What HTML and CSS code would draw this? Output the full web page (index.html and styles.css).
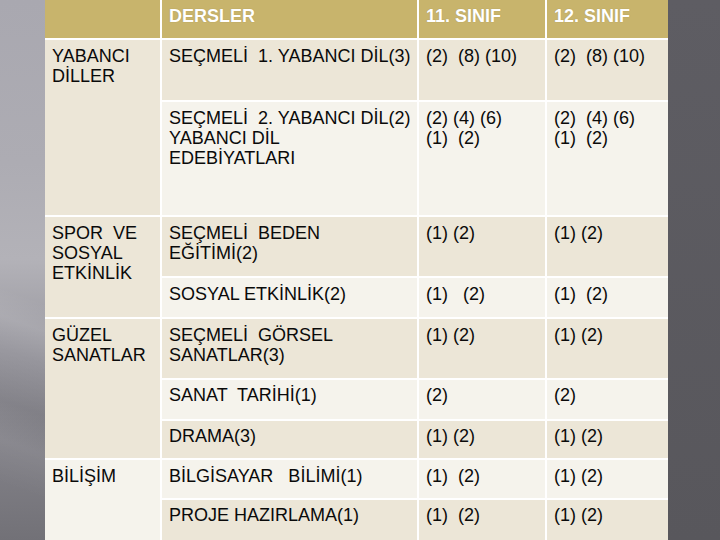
FILE: index.html
```html
<!DOCTYPE html>
<html lang="tr">
<head>
<meta charset="utf-8">
<title>Dersler</title>
<link rel="stylesheet" href="styles.css">
</head>
<body>
<div class="slide">
  <div class="grid">
    <div class="cell head"></div>
    <div class="cell head">DERSLER</div>
    <div class="cell head">11. SINIF</div>
    <div class="cell head">12. SINIF</div>

    <div class="cell dark span2">YABANCI<br>DİLLER</div>
    <div class="cell dark">SEÇMELİ  1. YABANCI DİL(3)</div>
    <div class="cell dark">(2)  (8) (10)</div>
    <div class="cell dark">(2)  (8) (10)</div>

    <div class="cell light">SEÇMELİ  2. YABANCI DİL(2)<br>YABANCI DİL<br>EDEBİYATLARI</div>
    <div class="cell light">(2) (4) (6)<br>(1)  (2)</div>
    <div class="cell light">(2)  (4) (6)<br>(1)  (2)</div>

    <div class="cell dark span2">SPOR  VE<br>SOSYAL<br>ETKİNLİK</div>
    <div class="cell dark">SEÇMELİ  BEDEN<br>EĞİTİMİ(2)</div>
    <div class="cell dark">(1) (2)</div>
    <div class="cell dark">(1) (2)</div>

    <div class="cell light">SOSYAL ETKİNLİK(2)</div>
    <div class="cell light">(1)   (2)</div>
    <div class="cell light">(1)  (2)</div>

    <div class="cell dark span3">GÜZEL<br>SANATLAR</div>
    <div class="cell dark">SEÇMELİ  GÖRSEL<br>SANATLAR(3)</div>
    <div class="cell dark">(1) (2)</div>
    <div class="cell dark">(1) (2)</div>

    <div class="cell light short">SANAT  TARİHİ(1)</div>
    <div class="cell light short">(2)</div>
    <div class="cell light short">(2)</div>

    <div class="cell dark short">DRAMA(3)</div>
    <div class="cell dark short">(1) (2)</div>
    <div class="cell dark short">(1) (2)</div>

    <div class="cell light span2">BİLİŞİM</div>
    <div class="cell light">BİLGİSAYAR   BİLİMİ(1)</div>
    <div class="cell light">(1)  (2)</div>
    <div class="cell light">(1) (2)</div>

    <div class="cell dark short">PROJE HAZIRLAMA(1)</div>
    <div class="cell dark short">(1)  (2)</div>
    <div class="cell dark short">(1) (2)</div>
  </div>
</div>
</body>
</html>
```

FILE: styles.css
```css
html, body {
  margin: 0;
  padding: 0;
}

body {
  width: 720px;
  height: 540px;
  overflow: hidden;
  background-color: #5a595f;
  background-image:
    linear-gradient(200deg, rgba(255,255,255,0) 55%, rgba(255,255,255,0.10) 60%, rgba(255,255,255,0) 66%, rgba(0,0,0,0.06) 75%, rgba(255,255,255,0.05) 82%, rgba(0,0,0,0) 90%),
    linear-gradient(to bottom, #a9a8b0 0%, #adacb3 30%, #b3b2b8 48%, #9d9ca3 62%, #87868d 78%, #727177 100%),
    linear-gradient(to bottom, #5e5d63 0%, #58575c 100%);
  background-size: 60px 540px, 60px 540px, 720px 540px;
  background-repeat: no-repeat;
  font-family: "Liberation Sans", Arial, sans-serif;
}

.slide {
  padding-left: 45px;
}

.grid {
  display: grid;
  width: 623px;
  grid-template-columns: 115px 255px 126px 121px;
  grid-template-rows: 38px 60px 113px 59px 39px 59px 39px 37px 38px 40px;
  gap: 2px;
  background: #ffffff;
}

.cell {
  box-sizing: border-box;
  padding: 6px 7px 0 7px;
  font-size: 18px;
  line-height: 20px;
  color: #0a0a0a;
  white-space: pre;
  overflow: hidden;
}

.head {
  background: #c8b46c;
  color: #ffffff;
  font-weight: bold;
  text-shadow: 0 0 1px rgba(90, 70, 20, 0.35);
}

.dark {
  background: #ece6d7;
}

.light {
  background: #f5f3ec;
}

.short {
  padding-top: 4.5px;
}

.span2 {
  grid-row: span 2;
}

.span3 {
  grid-row: span 3;
}
```
